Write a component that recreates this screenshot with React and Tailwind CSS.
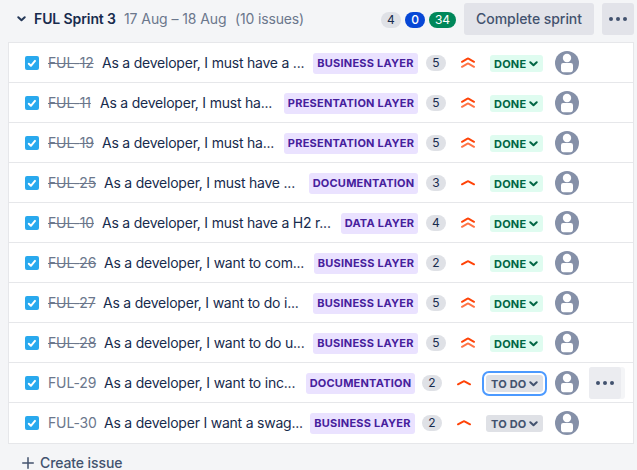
const issues = [
  { id: 12, text: "As a developer, I must have a ...", epic: "BUSINESS LAYER", points: 5, high: true, done: true, keyW: "w-[46px]", epicW: "w-[105px]" },
  { id: 11, text: "As a developer, I must ha...", epic: "PRESENTATION LAYER", points: 5, high: true, done: true, keyW: "w-[44px]", epicW: "w-[134px]" },
  { id: 19, text: "As a developer, I must ha...", epic: "PRESENTATION LAYER", points: 5, high: true, done: true, keyW: "w-[46px]", epicW: "w-[134px]" },
  { id: 25, text: "As a developer, I must have ...", epic: "DOCUMENTATION", points: 3, high: false, done: true, keyW: "w-[48px]", epicW: "w-[109px]" },
  { id: 10, text: "As a developer, I must have a H2 r...", epic: "DATA LAYER", points: 4, high: true, done: true, keyW: "w-[46px]", epicW: "w-[77px]" },
  { id: 26, text: "As a developer, I want to com...", epic: "BUSINESS LAYER", points: 2, high: false, done: true, keyW: "w-[48px]", epicW: "w-[104px]" },
  { id: 27, text: "As a developer, I want to do i...", epic: "BUSINESS LAYER", points: 5, high: true, done: true, keyW: "w-[47px]", epicW: "w-[105px]" },
  { id: 28, text: "As a developer, I want to do u...", epic: "BUSINESS LAYER", points: 5, high: true, done: true, keyW: "w-[48px]", epicW: "w-[105px]" },
  { id: 29, text: "As a developer, I want to inc...", epic: "DOCUMENTATION", points: 2, high: false, done: false, focused: true, keyW: "w-[48px]", epicW: "w-[109px]" },
  { id: 30, text: "As a developer I want a swag...", epic: "BUSINESS LAYER", points: 2, high: false, done: false, keyW: "w-[48px]", epicW: "w-[105px]" },
];

function Chevron({ className }) {
  return (
    <svg className={className} width="9" height="6" viewBox="0 0 9 6" fill="none" stroke="currentColor" strokeWidth="2" strokeLinecap="round" strokeLinejoin="round">
      <path d="M1.3 1.2 4.5 4.2 7.7 1.2" />
    </svg>
  );
}

function Dots() {
  return (
    <svg width="18" height="4" viewBox="0 0 18 4" fill="#42526e">
      <circle cx="2" cy="2" r="2" />
      <circle cx="9" cy="2" r="2" />
      <circle cx="16" cy="2" r="2" />
    </svg>
  );
}

function Priority({ high }) {
  return (
    <svg className="shrink-0" width="14" height="12" viewBox="0 0 14 12" fill="none" strokeWidth="2" strokeLinecap="round" strokeLinejoin="round">
      {high ? (
        <>
          <path d="M1 4.8 6.5 1.7Q7 1.4 7.5 1.7L13 4.8" stroke="#ff4308" />
          <path d="M1 9.8 6.5 6.7Q7 6.4 7.5 6.7L13 9.8" stroke="#ff7446" />
        </>
      ) : (
        <path d="M1 7.3 6.5 4.3Q7 4 7.5 4.3L13 7.3" stroke="#ff4308" />
      )}
    </svg>
  );
}

function Avatar() {
  return (
    <svg className="ml-3 shrink-0" width="24" height="24" viewBox="0 0 24 24">
      <circle cx="12" cy="12" r="12" fill="#8590a8" />
      <circle cx="12" cy="7" r="4.2" fill="white" />
      <path d="M6 14.2a2.2 2.2 0 0 1 2.2-2.2h7.6a2.2 2.2 0 0 1 2.2 2.2v4.2q0 2.9-3.6 2.9h-4.8q-3.6 0-3.6-2.9z" fill="white" />
    </svg>
  );
}

function Checkbox() {
  return (
    <span className="flex size-3.5 shrink-0 items-center justify-center rounded-xs bg-[#29a9ee]">
      <svg width="10" height="9" viewBox="0 0 10 9" fill="none" stroke="white" strokeWidth="2" strokeLinecap="round" strokeLinejoin="round">
        <path d="M1.8 4.8 3.9 6.8 8 1.9" />
      </svg>
    </span>
  );
}

function Row({ issue, last }) {
  const { done, focused } = issue;
  return (
    <div className={`flex h-10 shrink-0 items-center border-b pl-4 pt-px ${last ? "border-white" : "border-[#e6e7ea]"}`}>
      <Checkbox />
      <span className={`ml-[9px] shrink-0 whitespace-nowrap text-[14px] leading-5 tracking-[-0.15px] text-[#6b778c] ${issue.keyW} ${done ? "line-through" : ""}`}>
        FUL-{issue.id}
      </span>
      <span className="ml-2 min-w-0 flex-1 whitespace-nowrap text-[14px] leading-5 tracking-[-0.22px] text-[#172b4d]">{issue.text}</span>
      <span className={`mt-px flex h-[21px] shrink-0 items-center justify-center whitespace-nowrap rounded-[3px] bg-[#eae2ff] text-[11px] font-bold tracking-[0.22px] text-[#46209c] ${issue.epicW}`}>
        {issue.epic}
      </span>
      <span className={`flex h-4 w-5 shrink-0 items-center justify-center rounded-full bg-[#dfe1e6] text-[12px] text-[#172b4d] ${done ? "ml-2 mr-[15px]" : "ml-[7px] mr-[15px]"}`}>
        {issue.points}
      </span>
      <Priority high={issue.high} />
      <span
        className={`mt-px flex h-[17px] shrink-0 items-center rounded-[3px] text-[11px] font-bold tracking-[0.2px] ${
          done ? "ml-[15px] w-[53px] bg-[#dffcf0] pl-1 text-[#006644]" : "ml-[15px] w-[57px] bg-[#dfe1e6] pl-[5px] text-[#42526e]"
        } ${focused ? "outline-2 outline-offset-2 outline-[#4c9aff]" : ""}`}
      >
        <span className="w-[32px] whitespace-nowrap pt-px">{done ? "DONE" : "TO DO"}</span>
        <Chevron className={done ? "ml-[3px]" : "ml-1.5"} />
      </span>
      <Avatar />
      <span className="flex w-[54px] shrink-0 items-center pl-2.5">
        {focused && (
          <span className="flex w-9 rounded-[3px] bg-[#f4f5f7]">
            <span className="flex size-8 items-center justify-center rounded-[3px] bg-[#ebecf0]">
              <Dots />
            </span>
          </span>
        )}
      </span>
    </div>
  );
}

export default function App() {
  return (
    <main className="flex h-[470px] w-[637px] flex-col overflow-hidden bg-[#f4f5f7] font-['Inter',sans-serif]">
      <header className="flex h-[42px] shrink-0 items-center whitespace-nowrap pb-1 pl-[17px] pr-[3px] text-[14px] leading-5">
        <Chevron className="mr-2 text-[#253858]" />
        <h1 className="w-[90px] font-semibold tracking-[-0.1px] text-[#172b4d]">FUL Sprint 3</h1>
        <span className="w-[111px] tracking-[-0.08px] text-[#6b778c]">17 Aug – 18 Aug</span>
        <span className="tracking-[-0.15px] text-[#6b778c]">(10 issues)</span>
        <div className="ml-auto flex items-center gap-1 pt-0.5 text-[12px] leading-4">
          <span className="flex h-4 w-5 items-center justify-center rounded-full bg-[#dfe1e6] text-[#172b4d]">4</span>
          <span className="flex h-4 w-5 items-center justify-center rounded-full bg-[#0747d6] font-medium text-white">0</span>
          <span className="flex h-4 w-[27px] items-center justify-center rounded-full bg-[#00875a] text-white">34</span>
        </div>
        <button className="ml-2 h-8 w-[130px] rounded-[3px] bg-[#e2e3e9] font-medium tracking-[-0.05px] text-[#42526e]">Complete sprint</button>
        <button className="ml-2 flex size-8 items-center justify-center rounded-[3px] bg-[#e2e3e9]">
          <Dots />
        </button>
      </header>
      <section className="ml-2 flex h-[402px] w-[626px] shrink-0 flex-col border border-[#e6e7ea] bg-white">
        {issues.map((issue, i) => (
          <Row key={issue.id} issue={issue} last={i === issues.length - 1} />
        ))}
      </section>
      <button className="mt-[9px] flex shrink-0 items-center gap-1.5 pl-[22px] text-[14px] font-medium leading-5 tracking-[-0.1px] text-[#42526e]">
        <svg width="12" height="12" viewBox="0 0 12 12" fill="none" stroke="currentColor" strokeWidth="1.5" strokeLinecap="round">
          <path d="M6 .75v10.5M.75 6h10.5" />
        </svg>
        Create issue
      </button>
    </main>
  );
}
